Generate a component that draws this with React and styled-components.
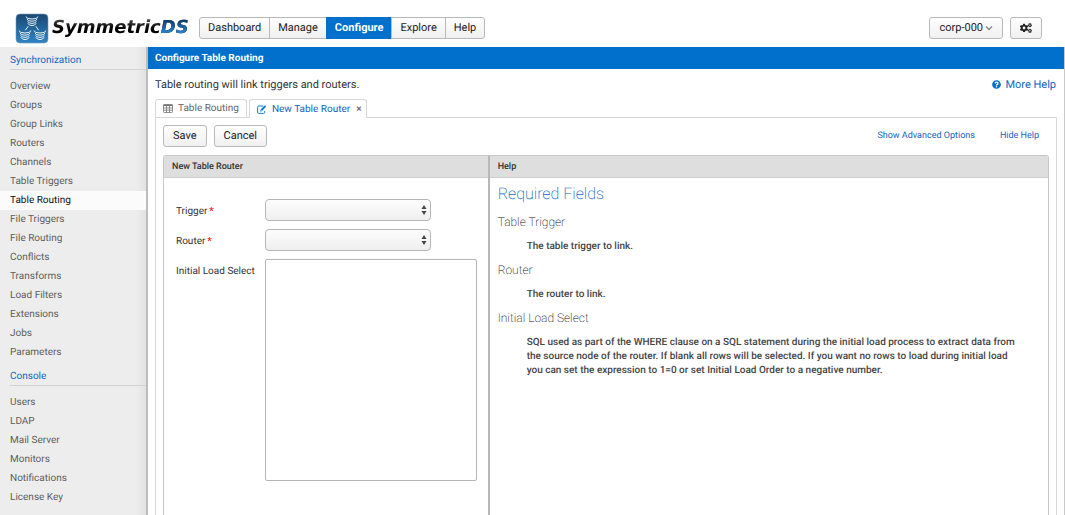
import React from "react";
import styled, { createGlobalStyle } from "styled-components";
import { FaCogs, FaQuestionCircle } from "react-icons/fa";

const blue = "#0070cc";
const link = "#1066c2";

const GlobalStyle = createGlobalStyle`
  *, *::before, *::after { box-sizing: border-box; }
  body {
    margin: 0;
    font-family: Roboto, "Liberation Sans", sans-serif;
    font-size: 11px;
    color: #333;
    background: #fff;
    text-rendering: geometricPrecision;
  }
  button, select, textarea { font-family: inherit; text-rendering: inherit; }
  a { color: ${link}; text-decoration: none; }
  h1, h2, h3, h4, p, ul, dl, dd { margin: 0; padding: 0; font-weight: 400; }
`;

const Page = styled.div`
  display: flex;
  flex-direction: column;
  height: 100vh;
  overflow: hidden;
`;

const Header = styled.header`
  display: flex;
  align-items: center;
  height: 47px;
  flex: none;
  padding: 9px 23px 0 15px;
`;

const Brand = styled.a`
  display: flex;
  align-items: center;
  gap: 3px;
  width: 184px;
  flex: none;
`;

const Wordmark = styled.span`
  font-family: "DejaVu Sans", sans-serif;
  font-size: 18px;
  font-weight: 700;
  font-style: italic;
  line-height: 24px;
  color: transparent;
  background: linear-gradient(#444 15%, #000 55%);
  background-clip: text;
`;

const WordmarkAccent = styled.span`
  background: linear-gradient(#0d3a6b 15%, #2d8ad6 80%);
  background-clip: text;
`;

const buttonFace = `
  border: 1px solid #b9b9b9;
  background: linear-gradient(#fefefe, #f0f0f0);
  color: #222;
  font-size: 11px;
  line-height: 20px;
  height: 22px;
`;

const Nav = styled.nav`
  display: flex;
`;

const NavButton = styled.button`
  ${buttonFace}
  padding: 0 8px;
  margin-left: -1px;
  &:first-child { border-radius: 3px 0 0 3px; margin-left: 0; }
  &:last-child { border-radius: 0 3px 3px 0; }
  &[aria-current="page"] {
    background: ${blue};
    border-color: ${blue};
    color: #fff;
    font-weight: 700;
  }
`;

const HeaderTools = styled.div`
  display: flex;
  gap: 7px;
  margin-left: auto;
`;

const Button = styled.button`
  ${buttonFace}
  display: flex;
  align-items: center;
  gap: 2px;
  border-radius: 3px;
  padding: 0 9px;
`;

const Body = styled.div`
  display: flex;
  flex: 1;
  min-height: 0;
`;

const Sidebar = styled.aside`
  width: 148px;
  flex: none;
  padding-top: 2px;
  background: linear-gradient(to left, #e2e2e2, #ededed 10px);
  border-right: 2px solid #bcbcbc;
`;

const SideHeading = styled.h2`
  && { margin: 0 0 7px 10px; padding-top: 3px; }
  border-bottom: 1px solid #d2d2d2;
  font-size: 10px;
  line-height: 17px;
  color: ${link};
`;

const SideList = styled.ul`
  list-style: none;
  && { margin-bottom: 3px; }
  font-size: 10px;
`;

const SideLink = styled.a`
  display: block;
  padding-left: 10px;
  line-height: 19px;
  color: #5e5e5e;
  &[aria-current="page"] { background: #fbfbfb; color: #111; }
`;

const Main = styled.main`
  display: flex;
  flex-direction: column;
  flex: 1;
  min-width: 0;
  border-right: 1px solid #c9c9c9;
`;

const TitleBar = styled.h1`
  flex: none;
  && { padding: 2px 0 0 7px; font-weight: 700; }
  background: ${blue};
  color: #fff;
  font-size: 10px;
  line-height: 20px;
`;

const Intro = styled.div`
  display: flex;
  justify-content: space-between;
  padding: 6px 8px 0 7px;
  font-size: 11px;
  line-height: 19px;
`;

const IconLink = styled.a`
  display: flex;
  align-items: center;
  gap: 4px;
  svg { color: ${blue}; }
`;

const TabSet = styled.section`
  display: flex;
  flex-direction: column;
  flex: 1;
  min-height: 0;
  margin: 5px 7px 0;
`;

const TabBar = styled.div`
  display: flex;
  gap: 2px;
`;

const Tab = styled.button`
  display: flex;
  align-items: center;
  gap: 5px;
  height: 18px;
  padding: 0 7px;
  border: 1px solid #d8d8d8;
  border-bottom: 0;
  border-radius: 3px 3px 0 0;
  background: #fff;
  color: #666;
  font-size: 10px;
  line-height: 17px;
  &[aria-selected="true"] {
    color: ${link};
    height: 19px;
    padding-right: 5px;
    z-index: 1;
  }
`;

const CloseMark = styled.span`
  margin-left: 1px;
  color: #777;
  font-weight: 700;
`;

const TabSheet = styled.div`
  display: flex;
  flex-direction: column;
  flex: 1;
  min-height: 0;
  margin-top: -1px;
  padding: 7px 7px 0;
  border: 1px solid #d8d8d8;
  border-bottom: 0;
`;

const Toolbar = styled.div`
  display: flex;
  align-items: center;
  gap: 7px;
  margin-bottom: 8px;
`;

const ToolbarLinks = styled.div`
  display: flex;
  gap: 25px;
  margin-left: auto;
  padding-right: 10px;
  font-size: 9px;
  line-height: 18px;
`;

const Split = styled.div`
  display: flex;
  flex: 1;
  min-height: 0;
  border: 1px solid #c8c8c8;
  border-bottom: 0;
  border-radius: 3px 3px 0 0;
`;

const Pane = styled.section`
  flex: ${(p) => p.$grow} 1 0;
  min-width: 0;
  & + & { border-left: 2px solid #b8b8b8; }
`;

const PaneTitle = styled.h2`
  && { padding: 2px 0 0 8px; font-weight: 500; }
  background: #dedede;
  border-bottom: 1px solid #cecece;
  font-size: 9px;
  line-height: 19px;
`;

const Form = styled.form`
  display: grid;
  grid-template-columns: 77px minmax(0, 212px);
  column-gap: 12px;
  row-gap: 8px;
  padding: 21px 11px 0 12px;
`;

const Label = styled.label`
  padding-top: 4px;
  font-size: 10px;
  line-height: 18px;
  white-space: nowrap;
`;

const Required = styled.span`
  margin-left: 2px;
  color: #f22;
  font-weight: 700;
`;

const SelectBox = styled.div`
  display: grid;
  width: 166px;
  align-items: center;
  & > * { grid-area: 1 / 1; }
  svg { justify-self: end; margin-right: 4px; pointer-events: none; }
`;

const Select = styled.select`
  appearance: none;
  width: 100%;
  height: 22px;
  border: 1px solid #b5b5b5;
  border-radius: 4px;
  background: linear-gradient(#fdfdfd, #efefef);
`;

const TextArea = styled.textarea`
  display: block;
  width: 100%;
  height: 222px;
  border: 1px solid #b5b5b5;
  border-radius: 2px;
  background: #fff;
  resize: none;
`;

const HelpText = styled.div`
  padding: 6px 8px;
`;

const HelpHeading = styled.h3`
  && { margin-bottom: 8px; font-weight: 200; }
  color: ${link};
  font-size: 16px;
  line-height: 20px;
`;

const HelpTerm = styled.dt`
  font-size: 12px;
  font-weight: 200;
  line-height: 20px;
  color: #111;
`;

const HelpDetail = styled.dd`
  && { margin: 8px 16px 6px 29px; font-weight: 500; }
  color: #444;
  font-size: 10px;
  line-height: 14px;
`;

function LogoMark() {
  const stacks = [
    [17, 4],
    [10, 18],
    [25, 18],
  ];
  const rows = [
    [0, 6],
    [2.2, 5],
    [4.4, 4.5],
    [6.6, 4],
  ];
  return (
    <svg width="34" height="31" viewBox="0 0 34 31" aria-hidden="true">
      <defs>
        <linearGradient id="mark" x1="0" y1="0" x2="0" y2="1">
          <stop offset="0" stopColor="#194872" />
          <stop offset="1" stopColor="#2f83c4" />
        </linearGradient>
      </defs>
      <rect x="1" y="1" width="32" height="29" rx="4" fill="url(#mark)" stroke="#7799b5" strokeWidth="0.6" />
      <g fill="none" stroke="#e9f2f9" strokeWidth="1" strokeLinecap="round">
        {stacks.map(([x, y]) =>
          rows.map(([dy, r]) => (
            <path key={`${x}-${dy}`} d={`M${x - r} ${y + dy}q1 2 ${r} 2t${r}-2`} />
          ))
        )}
        <path d="M13 13.500L10.500 17M21 13.500L23.500 17" />
      </g>
    </svg>
  );
}

function TableIcon() {
  return (
    <svg width="10" height="9" viewBox="0 0 10 9" fill="none" stroke="#777" strokeWidth="0.8" aria-hidden="true">
      <rect x="0.500" y="0.500" width="9" height="8" rx="0.700" />
      <path d="M.5 1.300H9.500" strokeWidth="1.500" />
      <path d="M.5 4H9.500M.5 6.200H9.500M3.500 1V8.500M6.500 1V8.500" />
    </svg>
  );
}

function EditIcon() {
  return (
    <svg width="10" height="9" viewBox="0 0 10 9" fill="none" stroke="#1680cf" aria-hidden="true">
      <path d="M6.300 1H1.800Q.6 1 .6 2.200V7.200Q.6 8.400 1.800 8.400H6.600Q7.800 8.400 7.800 7.200V5.800" />
      <path d="M4.300 5.200L8.600 .9" strokeWidth="2" />
      <path d="M3.200 6.400V4.700L4.900 6.400z" fill="#1680cf" stroke="none" />
    </svg>
  );
}

function Arrows() {
  return (
    <svg width="6" height="10" viewBox="0 0 6 10" fill="#444" aria-hidden="true">
      <path d="M3 0L5.500 4H.5zM3 10L.5 6H5.500z" />
    </svg>
  );
}

function Chevron() {
  return (
    <svg width="8" height="6" viewBox="0 0 8 6" fill="none" stroke="#888" strokeWidth="1.3" aria-hidden="true">
      <path d="M1 1.500L4 4.500L7 1.500" />
    </svg>
  );
}

const navItems = ["Dashboard", "Manage", "Configure", "Explore", "Help"];

const sections = [
  ["Synchronization", ["Overview", "Groups", "Group Links", "Routers", "Channels", "Table Triggers", "Table Routing", "File Triggers", "File Routing", "Conflicts", "Transforms", "Load Filters", "Extensions", "Jobs", "Parameters"]],
  ["Console", ["Users", "LDAP", "Mail Server", "Monitors", "Notifications", "License Key"]],
];

const help = [
  ["Table Trigger", "The table trigger to link."],
  ["Router", "The router to link."],
  ["Initial Load Select", "SQL used as part of the WHERE clause on a SQL statement during the initial load process to extract data from the source node of the router. If blank all rows will be selected. If you want no rows to load during initial load you can set the expression to 1=0 or set Initial Load Order to a negative number."],
];

function SelectField({ id, label }) {
  return (
    <>
      <Label htmlFor={id}>
        {label}
        <Required>*</Required>
      </Label>
      <SelectBox>
        <Select id={id} required />
        <Arrows />
      </SelectBox>
    </>
  );
}

export default function App() {
  return (
    <Page>
      <GlobalStyle />
      <Header>
        <Brand href="#home">
          <LogoMark />
          <Wordmark>
            Symmetric<WordmarkAccent>DS</WordmarkAccent>
          </Wordmark>
        </Brand>
        <Nav>
          {navItems.map((name) => (
            <NavButton key={name} type="button" aria-current={name === "Configure" ? "page" : undefined}>
              {name}
            </NavButton>
          ))}
        </Nav>
        <HeaderTools>
          <Button type="button">
            corp-000 <Chevron />
          </Button>
          <Button type="button" aria-label="Settings">
            <FaCogs size={12} />
          </Button>
        </HeaderTools>
      </Header>
      <Body>
        <Sidebar>
          {sections.map(([title, items]) => (
            <React.Fragment key={title}>
              <SideHeading>{title}</SideHeading>
              <SideList>
                {items.map((item) => (
                  <li key={item}>
                    <SideLink href="#item" aria-current={item === "Table Routing" ? "page" : undefined}>
                      {item}
                    </SideLink>
                  </li>
                ))}
              </SideList>
            </React.Fragment>
          ))}
        </Sidebar>
        <Main>
          <TitleBar>Configure Table Routing</TitleBar>
          <Intro>
            <p>Table routing will link triggers and routers.</p>
            <IconLink href="#help">
              <FaQuestionCircle size={9} /> More Help
            </IconLink>
          </Intro>
          <TabSet>
            <TabBar role="tablist">
              <Tab type="button" role="tab" aria-selected="false">
                <TableIcon /> Table Routing
              </Tab>
              <Tab type="button" role="tab" aria-selected="true">
                <EditIcon /> New Table Router <CloseMark>×</CloseMark>
              </Tab>
            </TabBar>
            <TabSheet>
              <Toolbar>
                <Button type="button">Save</Button>
                <Button type="button">Cancel</Button>
                <ToolbarLinks>
                  <a href="#advanced">Show Advanced Options</a>
                  <a href="#hide">Hide Help</a>
                </ToolbarLinks>
              </Toolbar>
              <Split>
                <Pane $grow={324}>
                  <PaneTitle>New Table Router</PaneTitle>
                  <Form>
                    <SelectField id="trigger" label="Trigger" />
                    <SelectField id="router" label="Router" />
                    <Label htmlFor="initial">Initial Load Select</Label>
                    <TextArea id="initial" />
                  </Form>
                </Pane>
                <Pane $grow={559}>
                  <PaneTitle>Help</PaneTitle>
                  <HelpText>
                    <HelpHeading>Required Fields</HelpHeading>
                    <dl>
                      {help.map(([term, detail]) => (
                        <React.Fragment key={term}>
                          <HelpTerm>{term}</HelpTerm>
                          <HelpDetail>{detail}</HelpDetail>
                        </React.Fragment>
                      ))}
                    </dl>
                  </HelpText>
                </Pane>
              </Split>
            </TabSheet>
          </TabSet>
        </Main>
      </Body>
    </Page>
  );
}
